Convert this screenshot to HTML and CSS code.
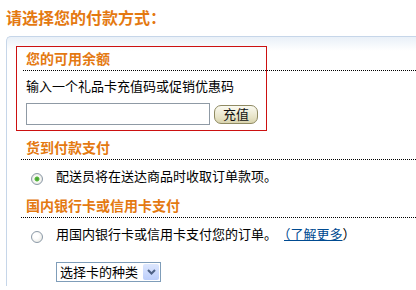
FILE: index.html
```html
<!DOCTYPE html>
<html lang="zh-CN">
<head>
<meta charset="utf-8">
<title>付款方式</title>
<link rel="stylesheet" href="styles.css">
</head>
<body>
<h1 class="page-title">请选择您的付款方式：</h1>
<div class="pay-box">
  <div class="balance">
    <h2 class="sec-head sec-head--balance">您的可用余额</h2>
    <p class="balance-text">输入一个礼品卡充值码或促销优惠码</p>
    <div class="redeem-row">
      <span class="text-input"></span>
      <span class="btn">充值</span>
    </div>
  </div>
  <div class="section">
    <h2 class="sec-head">货到付款支付</h2>
    <div class="opt-row">
      <span class="radio radio--checked"></span>
      <span class="opt-text">配送员将在送达商品时收取订单款项。</span>
    </div>
  </div>
  <div class="section">
    <h2 class="sec-head">国内银行卡或信用卡支付</h2>
    <div class="opt-row">
      <span class="radio"></span>
      <span class="opt-text">用国内银行卡或信用卡支付您的订单。<a class="more-link" href="#">（了解更多</a>）</span>
    </div>
    <div class="select">
      <span class="select-label">选择卡的种类</span>
      <span class="select-arrow"><svg width="9" height="6" viewBox="0 0 9 6"><path d="M1 1 L4.5 4.5 L8 1" fill="none" stroke="#4d6185" stroke-width="2"/></svg></span>
    </div>
  </div>
</div>
</body>
</html>
```
FILE: styles.css
```css
html, body {
  margin: 0;
  padding: 0;
  overflow: hidden;
  background: #fff;
}
body {
  font-family: "Noto Sans CJK SC", "Liberation Sans", sans-serif;
  font-size: 13px;
  color: #000;
}
.page-title {
  margin: 0;
  padding: 6px 0 0 6px;
  font-size: 16px;
  line-height: 22px;
  font-weight: bold;
  color: #e47911;
  height: 30px;
}
.pay-box {
  margin-left: 6px;
  border-left: 1px solid #c6d6e9;
  border-top: 1px solid #c6d6e9;
  border-top-left-radius: 5px;
  background: linear-gradient(#e9f0f8, #ffffff 14px);
  padding: 9px 0 4px 9px;
}
.balance {
  border: 1px solid #cc1111;
  padding: 0 0 5px 9px;
  box-sizing: border-box;
  width: 251px;
}
.sec-head {
  margin: 0;
  font-size: 14px;
  line-height: 18px;
  font-weight: bold;
  color: #e47911;
  padding: 0 0 3px 5px;
  border-bottom: 1px dotted #000;
}
.sec-head--balance {
  margin-left: -3px;
  padding-left: 3px;
  padding-top: 2px;
  width: 393px;
  box-sizing: border-box;
}
.balance-text {
  margin: 6px 0 0;
  line-height: 18px;
}
.redeem-row {
  display: flex;
  align-items: center;
  gap: 4px;
  margin-top: 8px;
}
.text-input {
  display: block;
  width: 184px;
  height: 22px;
  box-sizing: border-box;
  border: 1px solid #8f9aa5;
  background: #fff;
}
.btn {
  display: block;
  height: 19px;
  width: 44px;
  box-sizing: border-box;
  border: 1px solid #8f8a62;
  border-radius: 7px;
  background: linear-gradient(#fbfaf1, #e6e2c4 70%, #d8d3ad);
  text-align: center;
  line-height: 16px;
  font-size: 13px;
  color: #111;
}
.section {
  margin-left: 5px;
  margin-top: 7px;
}
.section + .section {
  margin-top: 11px;
}
.opt-row {
  display: flex;
  align-items: flex-start;
  margin-top: 7px;
  line-height: 18px;
}
.radio {
  display: block;
  width: 12px;
  height: 12px;
  box-sizing: border-box;
  border-radius: 50%;
  border: 1px solid #8c9aa8;
  background: radial-gradient(circle at 40% 40%, #ffffff 30%, #e2e2dc 100%);
  margin: 6px 13px 0 10px;
  flex: none;
}
.radio--checked {
  background: radial-gradient(circle, #3f9b2e 0, #5cb840 2px, #ffffff 3px, #f2f2ee 55%, #dcdcd4 100%);
}
.more-link {
  color: #004b91;
  text-decoration: underline;
  margin-left: 7px;
}
.select {
  display: flex;
  align-items: stretch;
  width: 105px;
  height: 20px;
  box-sizing: border-box;
  border: 1px solid #7f9db9;
  margin: 19px 0 0 35px;
  background: #fff;
}
.select-label {
  flex: 1;
  line-height: 18px;
  padding-left: 3px;
  white-space: nowrap;
  font-size: 13px;
}
.select-arrow {
  width: 16px;
  margin: 1px;
  background: linear-gradient(#dde7fe, #bccefb);
  border-radius: 2px;
  display: flex;
  align-items: center;
  justify-content: center;
}
```
